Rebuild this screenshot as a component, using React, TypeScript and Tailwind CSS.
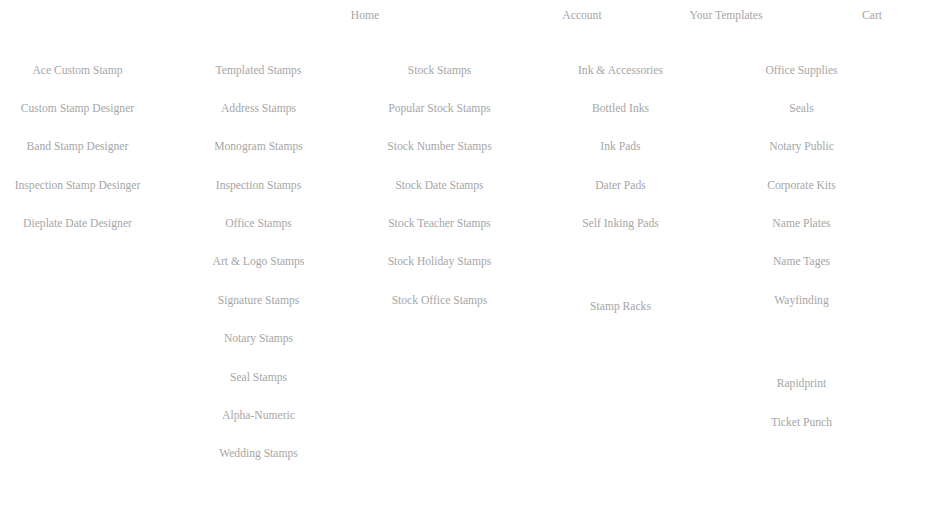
const columns: (string | null)[][] = [
  [
    "Ace Custom Stamp",
    "Custom Stamp Designer",
    "Band Stamp Designer",
    "Inspection Stamp Desinger",
    "Dieplate Date Designer",
  ],
  [
    "Templated Stamps",
    "Address Stamps",
    "Monogram Stamps",
    "Inspection Stamps",
    "Office Stamps",
    "Art & Logo Stamps",
    "Signature Stamps",
    "Notary Stamps",
    "Seal Stamps",
    "Alpha-Numeric",
    "Wedding Stamps",
  ],
  [
    "Stock Stamps",
    "Popular Stock Stamps",
    "Stock Number Stamps",
    "Stock Date Stamps",
    "Stock Teacher Stamps",
    "Stock Holiday Stamps",
    "Stock Office Stamps",
  ],
  [
    "Ink & Accessories",
    "Bottled Inks",
    "Ink Pads",
    "Dater Pads",
    "Self Inking Pads",
    null,
    "Stamp Racks",
  ],
  [
    "Office Supplies",
    "Seals",
    "Notary Public",
    "Corporate Kits",
    "Name Plates",
    "Name Tages",
    "Wayfinding",
    null,
    "Rapidprint",
    "Ticket Punch",
  ],
];

const App = () => {
  return (
    <div className="min-h-[510px] w-[938px] bg-white font-['Liberation_Serif',serif] text-[11.6px] text-[#a6a6a6]">
      <nav className="flex h-[31px] items-center">
        <a href="#" className="ml-[300px] w-[130px] text-center">
          Home
        </a>
        <a href="#" className="ml-[87px] w-[130px] text-center">
          Account
        </a>
        <a href="#" className="ml-[14px] w-[130px] text-center">
          Your Templates
        </a>
        <a href="#" className="ml-[16px] w-[130px] text-center">
          Cart
        </a>
      </nav>

      <div className="mt-[20px] grid grid-cols-[repeat(5,155px)] gap-x-[26px]">
        {columns.map((col, i) => (
          <ul key={i} className="flex flex-col">
            {col.map((item, j) =>
              item ? (
                <li key={j} className="flex h-[38.4px] items-center justify-center">
                  <a href="#">{item}</a>
                </li>
              ) : (
                <li key={j} className="h-[45px]" />
              )
            )}
          </ul>
        ))}
      </div>
    </div>
  );
};

export default App;
